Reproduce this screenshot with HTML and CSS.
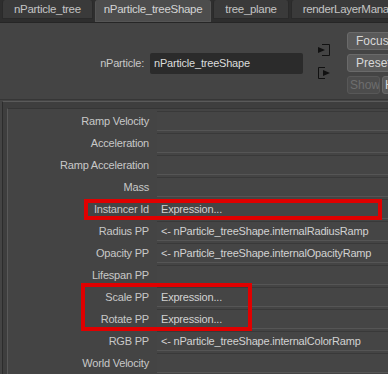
FILE: index.html
```html
<!DOCTYPE html>
<html lang="en">
<head>
    <meta charset="UTF-8">
    <title>Attribute Editor - nParticle_treeShape</title>
    <link rel="stylesheet" href="styles.css">
</head>
<body>
    <div class="tabs">
        <div class="tab">nParticle_tree</div>
        <div class="tab active">nParticle_treeShape</div>
        <div class="tab">tree_plane</div>
        <div class="tab">renderLayerManager</div>
    </div>

    <div class="header">
        <div class="name-row">
            <span class="name-label">nParticle:</span>
            <div class="name-field">nParticle_treeShape</div>
        </div>
        <div class="io-icons">
            <svg width="14" height="14" viewBox="0 0 14 14">
                <path d="M5 1.5 H12.5 V12.5 H5" fill="none" stroke="#111" stroke-width="1"/>
                <path d="M1 4 L8 7 L1 10 Z" fill="#111"/>
            </svg>
            <svg width="14" height="14" viewBox="0 0 14 14">
                <path d="M8 1.5 H1.5 V12.5 H8" fill="none" stroke="#111" stroke-width="1"/>
                <path d="M6 4 L13 7 L6 10 Z" fill="#111"/>
            </svg>
        </div>
        <div class="side-buttons">
            <div class="btn">Focus</div>
            <div class="btn">Presets</div>
            <div class="btn-row">
                <div class="btn small dim">Show</div>
                <div class="btn small">Hide</div>
            </div>
        </div>
    </div>

    <div class="section">
        <div class="attr-list">
            <div class="attr"><span class="label">Ramp Velocity</span><div class="field"></div></div>
            <div class="attr"><span class="label">Acceleration</span><div class="field"></div></div>
            <div class="attr"><span class="label">Ramp Acceleration</span><div class="field"></div></div>
            <div class="attr"><span class="label">Mass</span><div class="field"></div></div>
            <div class="attr"><span class="label">Instancer Id</span><div class="field">Expression...</div></div>
            <div class="attr"><span class="label">Radius PP</span><div class="field">&lt;- nParticle_treeShape.internalRadiusRamp</div></div>
            <div class="attr"><span class="label">Opacity PP</span><div class="field">&lt;- nParticle_treeShape.internalOpacityRamp</div></div>
            <div class="attr"><span class="label">Lifespan PP</span><div class="field"></div></div>
            <div class="attr"><span class="label">Scale PP</span><div class="field">Expression...</div></div>
            <div class="attr"><span class="label">Rotate PP</span><div class="field">Expression...</div></div>
            <div class="attr"><span class="label">RGB PP</span><div class="field">&lt;- nParticle_treeShape.internalColorRamp</div></div>
            <div class="attr"><span class="label">World Velocity</span><div class="field"></div></div>

            <div class="mark mark-instancer"></div>
            <div class="mark mark-scale"></div>
        </div>
    </div>
</body>
</html>
```

FILE: styles.css
```css
* {
    box-sizing: border-box;
    margin: 0;
    padding: 0;
}

body {
    width: 388px;
    height: 374px;
    overflow: hidden;
    background: #444444;
    font-family: 'Liberation Sans', Arial, sans-serif;
    font-size: 11px;
    letter-spacing: -0.2px;
    color: #c8c8c8;
}

/* tab strip */
.tabs {
    display: flex;
    gap: 2px;
    height: 23px;
    padding-left: 2px;
    background: #2e2e2e;
    border-bottom: 1px solid #262626;
    white-space: nowrap;
    overflow: hidden;
}

.tab {
    flex-shrink: 0;
    height: 19px;
    padding: 0 11px;
    line-height: 19px;
    background: #3a3a3a;
    color: #c4c4c4;
    border-radius: 3px 3px 0 0;
    border: 1px solid #2a2a2a;
    border-top: none;
    font-size: 11.5px;
    letter-spacing: -0.3px;
}

.tab.active {
    height: 22px;
    padding: 0 8px;
    background: #4d4d4d;
    color: #d4d4d4;
    border-color: #555;
}

/* header */
.header {
    display: flex;
    height: 77px;
    padding-top: 9px;
    border-bottom: 1px solid #363636;
}

.name-row {
    display: flex;
    align-items: center;
    gap: 6px;
    height: 22px;
    margin-top: 20px;
}

.name-label {
    width: 144px;
    text-align: right;
    color: #c8c8c8;
}

.name-field {
    width: 153px;
    height: 21px;
    padding: 0 4px;
    line-height: 21px;
    background: #2b2b2b;
    border-radius: 2px;
    color: #dcdcdc;
}

.io-icons {
    display: flex;
    flex-direction: column;
    gap: 9px;
    margin: 11px 0 0 14px;
}

.side-buttons {
    display: flex;
    flex-direction: column;
    gap: 4px;
    margin-left: 16px;
}

.btn {
    width: 50px;
    height: 18px;
    line-height: 17px;
    padding-left: 8px;
    background: #5a5a5a;
    border: 1px solid #6a6a6a;
    border-radius: 3px;
    color: #d8d8d8;
    font-size: 12px;
    letter-spacing: 0;
    white-space: nowrap;
    overflow: hidden;
}

.btn-row {
    display: flex;
    gap: 2px;
}

.btn.small {
    width: 33px;
    padding-left: 2px;
}

.btn.dim {
    background: #4c4c4c;
    border-color: #585858;
    color: #6e6e6e;
}

/* attribute section */
.section {
    margin: 1px 0 0 2px;
    padding: 6px 0 0 4px;
    border-top: 1px solid #5a5a5a;
    border-left: 1px solid #2c2c2c;
    height: 273px;
    background: #3e3e3e;
}

.attr-list {
    position: relative;
    height: 100%;
    border-top: 1px solid #353535;
    border-left: 1px solid #595959;
    background: #444;
    padding-top: 1px;
}

.attr {
    display: grid;
    grid-template-columns: 141px 1fr;
    gap: 8px;
    height: 22px;
    align-items: center;
}

.label {
    text-align: right;
    color: #c8c8c8;
    white-space: nowrap;
}

.field {
    height: 20px;
    line-height: 19px;
    padding-left: 4px;
    background: #454545;
    border-top: 1px solid #393939;
    border-bottom: 1px solid #555;
    color: #d2d2d2;
    white-space: nowrap;
    overflow: hidden;
}

/* red annotation boxes */
.mark {
    position: absolute;
    border: 4px solid #e00000;
}

.mark-instancer {
    left: 76px;
    top: 90px;
    width: 298px;
    height: 21px;
}

.mark-scale {
    left: 73px;
    top: 174px;
    width: 171px;
    height: 48px;
}
```
